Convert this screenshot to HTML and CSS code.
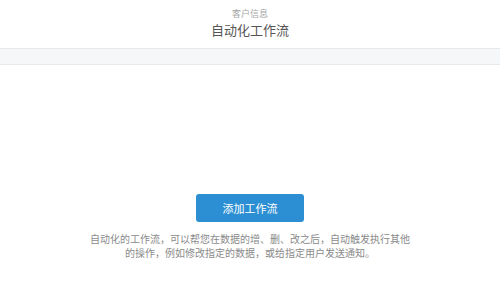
FILE: index.html
```html
<!DOCTYPE html>
<html lang="zh-CN">
<head>
  <meta charset="UTF-8" />
  <title>自动化工作流</title>
  <link rel="stylesheet" href="styles.css">
</head>
<body>
  <div class="header">
    <div class="sub">客户信息</div>
    <div class="title">自动化工作流</div>
  </div>
  <div class="toolbar"></div>
  <div class="empty">
    <button class="add">添加工作流</button>
    <p class="tip">自动化的工作流，可以帮您在数据的增、删、改之后，自动触发执行其他的操作，例如修改指定的数据，或给指定用户发送通知。</p>
  </div>
</body>
</html>
```

FILE: styles.css
```css
* {
  margin: 0;
  padding: 0;
  box-sizing: border-box;
}
body {
  width: 500px;
  height: 286px;
  background: #fff;
  font-family: "Noto Sans CJK SC", "Noto Sans", sans-serif;
  overflow: hidden;
}
.header {
  height: 49px;
  padding-top: 8px;
  text-align: center;
  border-bottom: 1px solid #e6e7e9;
}
.sub {
  font-size: 9px;
  line-height: 12px;
  color: #a5a5a5;
}
.title {
  font-size: 13px;
  line-height: 19px;
  color: #555;
}
.toolbar {
  height: 16px;
  background: #f6f7f9;
  border-bottom: 1px solid #e8e9eb;
}
.empty {
  display: flex;
  flex-direction: column;
  align-items: center;
  padding-top: 129px;
}
.add {
  width: 108px;
  height: 28px;
  border: none;
  border-radius: 3px;
  background: #2d8fd3;
  color: #fff;
  font-family: inherit;
  font-size: 11px;
}
.tip {
  width: 322px;
  margin-top: 10px;
  font-size: 10px;
  line-height: 14px;
  color: #8a8a8a;
  text-align: center;
}
```
